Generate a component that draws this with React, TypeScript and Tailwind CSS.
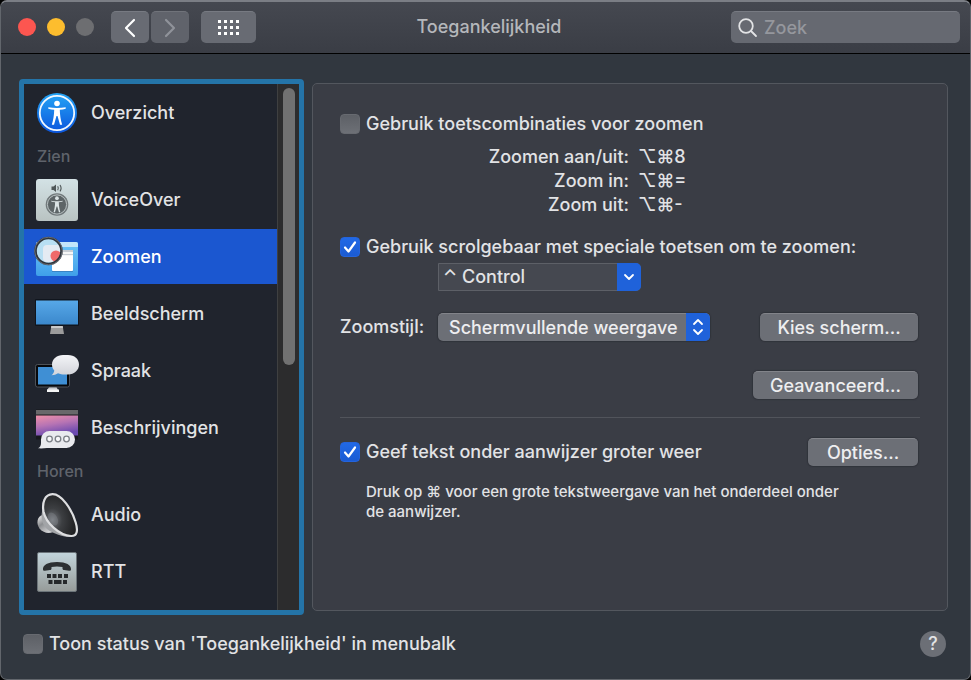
import type { ReactNode } from "react";

const shortcuts = [
  { label: "Zoomen aan/uit:", keys: "⌥⌘8" },
  { label: "Zoom in:", keys: "⌥⌘=" },
  { label: "Zoom uit:", keys: "⌥⌘-" },
];

function Figure({ color }: { color: string }) {
  return (
    <g fill={color}>
      <circle cx="21" cy="11.5" r="2.8" />
      <path d="M12.3 15.2c2.8.5 5.6.8 8.7.8s5.900-.3 8.700-.8v1.500c-2 .5-4 .9-5.900 1.100.1 5.200.8 9.900 2.400 15h-2.200l-2.500-8.800h-1l-2.500 8.800h-2.200c1.600-5.100 2.300-9.800 2.400-15-1.900-.2-3.900-.6-5.900-1.100z" />
    </g>
  );
}

function OverviewIcon() {
  return (
    <svg viewBox="0 0 42 42" className="size-[42px]" aria-hidden="true">
      <defs>
        <linearGradient id="ov" x1="0" y1="0" x2="0" y2="1">
          <stop offset="0" stopColor="#25a5f5" />
          <stop offset="1" stopColor="#0b55dd" />
        </linearGradient>
      </defs>
      <circle cx="21" cy="21" r="20" fill="url(#ov)" />
      <circle cx="21" cy="21" r="17.2" fill="none" stroke="#f1f8ff" strokeWidth="1.800" />
      <Figure color="#fff" />
    </svg>
  );
}

function VoiceOverIcon() {
  return (
    <svg viewBox="0 0 42 42" className="size-[42px]" aria-hidden="true">
      <defs>
        <linearGradient id="vo" x1="0" y1="0" x2="0" y2="1">
          <stop offset="0" stopColor="#d3e2e5" />
          <stop offset="1" stopColor="#b9c3c2" />
        </linearGradient>
      </defs>
      <rect x="0" y="0" width="42" height="42" rx="3" fill="url(#vo)" />
      <path d="M15.500 7.500h2l2.500-2v7.400l-2.500-2h-2z" fill="#4e5657" />
      <path d="M21.700 7.200q1.300 2 0 4M24 6q2.200 3.200 0 6.400" fill="none" stroke="#4e5657" strokeWidth="1.100" />
      <circle cx="21" cy="25.500" r="11.300" fill="#70787a" />
      <circle cx="21" cy="25.500" r="9.600" fill="#5d6567" stroke="#b9c2c3" strokeWidth="1" />
      <g transform="translate(7.100 11.600) scale(.66)">
        <Figure color="#dbe4e5" />
      </g>
    </svg>
  );
}

function ZoomIcon() {
  return (
    <svg viewBox="0 0 44 42" className="h-[42px] w-11 overflow-visible" aria-hidden="true">
      <defs>
        <linearGradient id="zm" x1="0" y1="0" x2="0" y2="1">
          <stop offset="0" stopColor="#6fc6f8" />
          <stop offset="1" stopColor="#3f9fe9" />
        </linearGradient>
        <clipPath id="lens">
          <circle cx="13.500" cy="15" r="12.500" />
        </clipPath>
      </defs>
      <rect x="1" y="6" width="42" height="34" rx="2" fill="url(#zm)" />
      <path d="M3 6h38a2 2 0 0 1 2 2v3H1V8a2 2 0 0 1 2-2z" fill="#c3e5fa" />
      <path d="M26 14h12v17H24z" fill="#f6f6f6" />
      <path d="M26 14h12v2H26zM26 18h12v1H26z" fill="#c9ced4" />
      <rect x="17" y="20" width="21" height="15" rx="1" fill="#fff" />
      <path d="M17 35.500h21" stroke="#3a84c4" />
      <circle cx="13.500" cy="15" r="12.500" fill="#b8dff3" />
      <g clipPath="url(#lens)">
        <rect x="8" y="9" width="22" height="17" rx="4" fill="#e4ebf3" />
        <circle cx="21" cy="20" r="5.500" fill="#ef6a6a" />
      </g>
      <circle cx="13.500" cy="15" r="13" fill="none" stroke="#2f343b" strokeWidth="2.600" />
      <circle cx="13.500" cy="15" r="13.800" fill="none" stroke="#8e949a" strokeWidth=".6" />
    </svg>
  );
}

function DisplayIcon() {
  return (
    <svg viewBox="0 0 44 42" className="h-[42px] w-11" aria-hidden="true">
      <defs>
        <linearGradient id="ds" x1="0" y1="0" x2="0" y2="1">
          <stop offset="0" stopColor="#57a8e8" />
          <stop offset="1" stopColor="#3b88cc" />
        </linearGradient>
      </defs>
      <path d="M16.500 32h11l1.500 9H15z" fill="#9b9b9b" />
      <path d="M16.500 32h11l.5 3H16z" fill="#c9c9c9" />
      <rect x="0" y="6" width="44" height="27" rx="1" fill="#10151d" />
      <rect x="1" y="7.500" width="42" height="24" fill="url(#ds)" />
    </svg>
  );
}

function SpeechIcon() {
  return (
    <svg viewBox="0 0 44 42" className="h-[42px] w-11" aria-hidden="true">
      <defs>
        <linearGradient id="bub" x1="0" y1="0" x2="0" y2="1">
          <stop offset="0" stopColor="#f3f4f7" />
          <stop offset="1" stopColor="#d2d4da" />
        </linearGradient>
      </defs>
      <path d="M15 36h6l2 4H12z" fill="#c9ccd0" />
      <path d="M12 39.500h12V42H12z" fill="#f5f5f5" />
      <rect x=".5" y="14.500" width="34" height="22.500" rx="2" fill="#07090c" stroke="#4e5258" />
      <rect x="3" y="17" width="29" height="17.500" fill="#3f8fd4" />
      <path
        d="M31 5h2c6.500 0 11 4 11 9.500S39.500 24.500 33 24.500h-3c-3 0-5-.4-7-1.300-1.800 1.300-4 2-6.500 2 1.700-1.200 2.600-2.800 2.800-4.700-1.500-1.700-2.300-3.700-2.300-6C17 9 22 5 28 5z"
        fill="url(#bub)"
      />
    </svg>
  );
}

function DescriptionsIcon() {
  return (
    <svg viewBox="0 0 44 42" className="h-[42px] w-11" aria-hidden="true">
      <defs>
        <linearGradient id="sky" x1="0" y1="0" x2=".35" y2="1">
          <stop offset="0" stopColor="#ef91a8" />
          <stop offset=".5" stopColor="#b774b4" />
          <stop offset="1" stopColor="#6c4bb0" />
        </linearGradient>
      </defs>
      <rect x="1" y="2.500" width="42" height="30" fill="#17181d" />
      <rect x="1" y="3" width="42" height="4.500" fill="#68686a" />
      <rect x="1" y="8.500" width="42" height="20" fill="url(#sky)" />
      <path
        d="M15 24h16.500a8.500 8.500 0 0 1 0 17H12c-3 .4-6 .6-9 .3 2-1 3-2.600 3-5.300v-3.500A8.500 8.500 0 0 1 15 24z"
        fill="#e9eaee"
      />
      <g fill="#f8f8fa" stroke="#7c8087" strokeWidth="1.300">
        <circle cx="14.500" cy="32" r="2.800" />
        <circle cx="23" cy="32" r="2.800" />
        <circle cx="31.500" cy="32" r="2.800" />
      </g>
    </svg>
  );
}

function AudioIcon() {
  return (
    <svg viewBox="0 0 44 46" className="h-[46px] w-11" aria-hidden="true">
      <defs>
        <linearGradient id="magnet" x1="0" y1="0" x2=".6" y2="1">
          <stop offset="0" stopColor="#f4f4f4" />
          <stop offset=".5" stopColor="#8c8e91" />
          <stop offset="1" stopColor="#d0d1d3" />
        </linearGradient>
        <radialGradient id="cone" cx=".28" cy=".62" r=".7">
          <stop offset="0" stopColor="#75797e" />
          <stop offset=".4" stopColor="#3d3f42" />
          <stop offset="1" stopColor="#1e1f21" />
        </radialGradient>
      </defs>
      <path d="M7.500 23C2 24.500 1 31.500 4.500 36.500c3.500 4.300 9 5.500 13.500 3.500L12 24z" fill="url(#magnet)" />
      <path d="M9 14C5 22 6 32 12 37c6 4.500 16 8 24 8L22 24z" fill="#a2a4a7" />
      <path
        d="M17.500 2.200C9.500 2.500 7 11 8.500 19.500 10.800 31 24.500 43.500 36 44c6.500.3 7-6 4.700-13.500C37 17.500 26.500 2 17.500 2.200z"
        fill="url(#cone)"
        stroke="#dddee0"
        strokeWidth="2.200"
      />
      <ellipse cx="18" cy="27" rx="4.500" ry="7" transform="rotate(-28 18 27)" fill="#a0a5ab" opacity=".25" />
    </svg>
  );
}

function RttIcon() {
  return (
    <svg viewBox="0 0 42 42" className="size-[42px]" aria-hidden="true">
      <defs>
        <linearGradient id="rt" x1="0" y1="0" x2="0" y2="1">
          <stop offset="0" stopColor="#c3d5dc" />
          <stop offset="1" stopColor="#969b99" />
        </linearGradient>
      </defs>
      <rect x="1.500" y="1.500" width="39" height="39" rx="1.500" fill="url(#rt)" stroke="#6c757a" />
      <path
        d="M7 18.500c-.5-4.500 5-7.500 14-7.500s14.500 3 14 7.500c-.1 1.200-.8 1.500-2 1.300l-5-.8c-1-.2-1.500-.7-1.500-1.600V16c-3.600-.8-7.400-.8-11 0v1.400c0 .9-.5 1.400-1.500 1.600l-5 .8c-1.200.2-1.900-.1-2-1.300z"
        fill="#2d3032"
      />
      <path
        d="M11 23h4v4h-4zM16.500 23h4v4h-4zM22 23h4v4h-4zM28 23h4v4h-4zM12.500 29h4v4h-4zM18 29h7.500v4H18zM27 29h4v4h-4z"
        fill="#26292b"
      />
    </svg>
  );
}

function SidebarItem({ icon, label, active }: { icon: ReactNode; label: string; active?: boolean }) {
  return (
    <li>
      <button
        type="button"
        className={`flex h-[57px] w-full items-center gap-3 border-y border-transparent bg-clip-padding pl-[11px] text-left ${
          active ? "bg-[#1b57d0] text-white" : ""
        }`}
      >
        <span className="flex w-11 shrink-0 justify-center">{icon}</span>
        {label}
      </button>
    </li>
  );
}

function Checkbox({ id, label, checked }: { id: string; label: string; checked?: boolean }) {
  return (
    <div className="flex h-6 items-center gap-[6px]">
      <span className="relative flex">
        <input
          id={id}
          type="checkbox"
          defaultChecked={checked}
          className="peer size-5 appearance-none rounded-[4px] border border-[#676a70] bg-linear-to-b from-[#5d6066] to-[#6d7076] checked:border-[#2464dc] checked:from-[#2169e6] checked:to-[#1a5bd3]"
        />
        <svg
          viewBox="0 0 20 20"
          className="pointer-events-none absolute inset-0 hidden size-5 peer-checked:block"
          fill="none"
          stroke="#fff"
          strokeWidth="2.200"
          strokeLinecap="round"
          strokeLinejoin="round"
          aria-hidden="true"
        >
          <path d="M5 10.500l3.500 4L15 5.500" />
        </svg>
      </span>
      <label htmlFor={id}>{label}</label>
    </div>
  );
}

function PushButton({ children, width }: { children: ReactNode; width: string }) {
  return (
    <button
      type="button"
      className={`flex h-7 items-center justify-center rounded-[5px] border-t border-[#82848a] bg-[#6c6f76] text-[#eeeef0] shadow-[0_0_1px_1px_#30333a] ${width}`}
    >
      {children}
    </button>
  );
}

export default function App() {
  return (
    <div className="min-h-screen bg-black font-['Inter','DejaVu_Sans',sans-serif] text-[18px] leading-6 font-medium text-[#e2e3e5]">
      <div className="flex min-h-screen flex-col overflow-hidden rounded-[7px] border border-t-2 border-[#62666c] border-t-[#7b7e85] bg-[#31373f]">
        {/* Title bar */}
        <header className="grid h-[52px] grid-cols-[1fr_auto_1fr] items-center border-b border-black bg-linear-to-b from-[#454850] to-[#3a3d45] pr-[10px] pb-px pl-[17px]">
          <div className="flex items-center">
            <div className="flex gap-[11px]">
              <button type="button" aria-label="Sluit" className="size-[18px] rounded-full bg-[#fc5650]" />
              <button type="button" aria-label="Minimaliseer" className="size-[18px] rounded-full bg-[#fdbd2e]" />
              <button type="button" aria-label="Zoom" disabled className="size-[18px] rounded-full bg-[#6d6e71]" />
            </div>
            <div className="ml-[17px] flex gap-[2px]">
              <button type="button" aria-label="Vorige" className="flex h-8 w-[38px] items-center justify-center rounded-[5px] border-t border-[#777a82] bg-[#686b73]">
                <svg viewBox="0 0 12 20" className="h-5 w-3" fill="none" stroke="#fff" strokeWidth="2.200" strokeLinecap="round" strokeLinejoin="round">
                  <path d="M10 2L2 10l8 8" />
                </svg>
              </button>
              <button type="button" aria-label="Volgende" disabled className="flex h-8 w-[38px] items-center justify-center rounded-[5px] border-t border-[#70737a] bg-[#60636b]">
                <svg viewBox="0 0 12 20" className="h-5 w-3" fill="none" stroke="#90939a" strokeWidth="2.200" strokeLinecap="round" strokeLinejoin="round">
                  <path d="M2 2l8 8-8 8" />
                </svg>
              </button>
            </div>
            <button type="button" aria-label="Toon alles" className="ml-3 flex h-8 w-[55px] items-center justify-center rounded-[5px] border-t border-[#777a82] bg-[#686b73]">
              <svg viewBox="0 0 21 15" className="h-[15px] w-[21px]" fill="#fff">
                {[0, 6, 12].map((y) =>
                  [0, 6, 12, 18].map((x) => <rect key={`${x}-${y}`} x={x} y={y} width="3" height="3" />)
                )}
              </svg>
            </button>
          </div>
          <h1 className="text-[18px] text-[#b5b7bb]">Toegankelijkheid</h1>
          <label className="flex h-8 w-[229px] items-center gap-[6px] justify-self-end rounded-[5px] border-t border-[#777a82] bg-[#666971] pl-[7px]">
            <svg viewBox="0 0 20 20" className="size-5 shrink-0" fill="none" stroke="#e2e3e5" strokeWidth="1.800" strokeLinecap="round" aria-hidden="true">
              <circle cx="8" cy="8" r="6.800" />
              <path d="M13 13l5 5" />
            </svg>
            <input type="search" aria-label="Zoek" placeholder="Zoek" className="w-full bg-transparent outline-none placeholder:text-[#95979d]" />
          </label>
        </header>

        <main className="flex items-stretch gap-2 pt-[25px] pr-[22px] pl-[18px]">
          {/* Sidebar */}
          <nav className="flex w-[285px] shrink-0 rounded-[4px] border-5 border-[#2474a8] bg-[#20242d]">
            <ul className="flex-1 pb-[10px]">
              <SidebarItem icon={<OverviewIcon />} label="Overzicht" />
              <li className="flex h-[30px] items-center pl-[13px] text-[16px] text-[#5f636b]">Zien</li>
              <SidebarItem icon={<VoiceOverIcon />} label="VoiceOver" />
              <SidebarItem icon={<ZoomIcon />} label="Zoomen" active />
              <SidebarItem icon={<DisplayIcon />} label="Beeldscherm" />
              <SidebarItem icon={<SpeechIcon />} label="Spraak" />
              <SidebarItem icon={<DescriptionsIcon />} label="Beschrijvingen" />
              <li className="flex h-[30px] items-center pl-[13px] text-[16px] text-[#5f636b]">Horen</li>
              <SidebarItem icon={<AudioIcon />} label="Audio" />
              <SidebarItem icon={<RttIcon />} label="RTT" />
            </ul>
            <div className="flex w-[22px] justify-center border-l border-[#3f4041] bg-[#2c2c2d] pt-1">
              <div className="h-[277px] w-3 rounded-full bg-[#717171]" />
            </div>
          </nav>

          {/* Zoom settings */}
          <section className="my-1 flex-1 rounded-[5px] border border-[#53575e] bg-[#3a3d45] px-[27px] pt-7">
            <Checkbox id="keys" label="Gebruik toetscombinaties voor zoomen" />
            <dl className="mt-[9px]">
              {shortcuts.map((s) => (
                <div key={s.label} className="flex gap-[9px]">
                  <dt className="w-[289px] text-right">{s.label}</dt>
                  <dd>{s.keys}</dd>
                </div>
              ))}
            </dl>

            <div className="mt-[18px]">
              <Checkbox id="scroll" label="Gebruik scrolgebaar met speciale toetsen om te zoomen:" checked />
            </div>
            <div className="relative mt-1 ml-[98px] w-[203px]">
              <select aria-label="Speciale toets" className="block h-7 w-full appearance-none rounded-r-[5px] border border-[#5d6067] bg-[#454850] pl-1 leading-6">
                <option>⌃ Control</option>
              </select>
              <span className="pointer-events-none absolute inset-y-0 right-0 flex w-6 items-center justify-center rounded-r-[5px] bg-[#1f62da]">
                <svg viewBox="0 0 12 8" className="h-2 w-3" fill="none" stroke="#fff" strokeWidth="1.800" strokeLinecap="round" strokeLinejoin="round">
                  <path d="M2 2l4 4 4-4" />
                </svg>
              </span>
            </div>

            <div className="mt-[22px] flex items-center">
              <label htmlFor="style" className="w-[98px]">Zoomstijl:</label>
              <div className="relative w-[272px]">
                <select id="style" className="block h-7 w-full appearance-none rounded-[5px] border-t border-[#82848a] bg-[#6c6f76] pl-[11px] leading-6 text-[#eeeef0] shadow-[0_0_1px_1px_#30333a]">
                  <option>Schermvullende weergave</option>
                </select>
                <span className="pointer-events-none absolute inset-y-0 right-0 flex w-6 items-center justify-center rounded-r-[5px] bg-[#1f62da]">
                  <svg viewBox="0 0 12 18" className="h-[18px] w-3" fill="none" stroke="#fff" strokeWidth="1.800" strokeLinecap="round" strokeLinejoin="round">
                    <path d="M2 6l4-4 4 4M2 12l4 4 4-4" />
                  </svg>
                </span>
              </div>
              <div className="mr-[2px] ml-auto">
                <PushButton width="w-[158px]">Kies scherm...</PushButton>
              </div>
            </div>
            <div className="mt-[30px] mr-[2px] flex justify-end">
              <PushButton width="w-[165px]">Geavanceerd...</PushButton>
            </div>

            <hr className="mt-[18px] border-[#51545b]" />

            <div className="mt-5 mr-[2px] flex items-center justify-between">
              <Checkbox id="hover" label="Geef tekst onder aanwijzer groter weer" checked />
              <PushButton width="w-[110px]">Opties...</PushButton>
            </div>
            <p className="mt-4 max-w-[516px] pl-[26px] text-[15px] leading-5">
              Druk op ⌘ voor een grote tekstweergave van het onderdeel onder de aanwijzer.
            </p>
          </section>
        </main>

        <footer className="flex items-center justify-between py-4 pr-6 pl-[22px]">
          <Checkbox id="menubar" label="Toon status van 'Toegankelijkheid' in menubalk" />
          <button type="button" aria-label="Help" className="flex size-[26px] items-center justify-center rounded-full bg-[#6c6f76] text-[18px]">
            ?
          </button>
        </footer>
      </div>
    </div>
  );
}
